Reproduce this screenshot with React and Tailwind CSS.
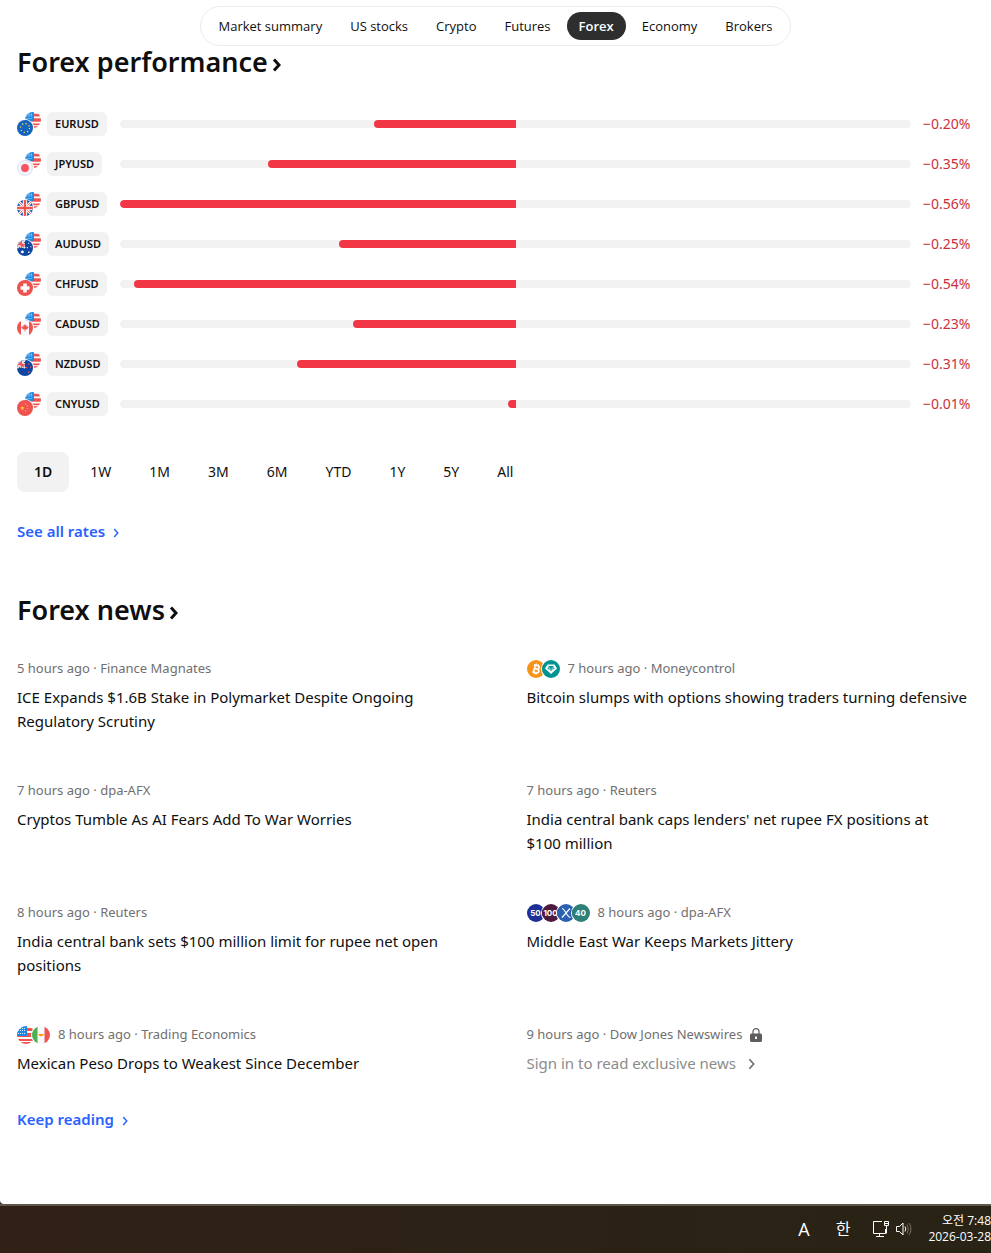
const sections = ["Market summary", "US stocks", "Crypto", "Futures", "Forex", "Economy", "Brokers"];

const rates = [
  { symbol: "EURUSD", flag: "eu", change: -0.2 },
  { symbol: "JPYUSD", flag: "jp", change: -0.35 },
  { symbol: "GBPUSD", flag: "gb", change: -0.56 },
  { symbol: "AUDUSD", flag: "au", change: -0.25 },
  { symbol: "CHFUSD", flag: "ch", change: -0.54 },
  { symbol: "CADUSD", flag: "ca", change: -0.23 },
  { symbol: "NZDUSD", flag: "nz", change: -0.31 },
  { symbol: "CNYUSD", flag: "cn", change: -0.01 },
];

const periods = ["1D", "1W", "1M", "3M", "6M", "YTD", "1Y", "5Y", "All"];

const news = [
  {
    time: "5 hours ago",
    source: "Finance Magnates",
    title: "ICE Expands $1.6B Stake in Polymarket Despite Ongoing Regulatory Scrutiny",
  },
  {
    time: "7 hours ago",
    source: "Moneycontrol",
    title: "Bitcoin slumps with options showing traders turning defensive",
    logos: ["btc", "usdt"],
  },
  { time: "7 hours ago", source: "dpa-AFX", title: "Cryptos Tumble As AI Fears Add To War Worries" },
  {
    time: "7 hours ago",
    source: "Reuters",
    title: "India central bank caps lenders' net rupee FX positions at $100\u00a0million",
  },
  {
    time: "8 hours ago",
    source: "Reuters",
    title: "India central bank sets $100 million limit for rupee net open positions",
  },
  {
    time: "8 hours ago",
    source: "dpa-AFX",
    title: "Middle East War Keeps Markets Jittery",
    logos: ["n50", "n100", "x", "n40"],
  },
  {
    time: "8 hours ago",
    source: "Trading Economics",
    title: "Mexican Peso Drops to Weakest Since December",
    logos: ["us", "mx"],
  },
  { time: "9 hours ago", source: "Dow Jones Newswires", title: "Sign in to read exclusive news", locked: true },
];

const maxChange = Math.max(...rates.map((rate) => Math.abs(rate.change)));

// All artwork is drawn on an 18x18 canvas and cut to a circle
const artwork = {
  us: (
    <>
      <path fill="#fff" d="M0 0h18v18H0z" />
      <path fill="#ef5350" d="M9 2h9v3H9zM9 7h9v4H9zM0 13h18v2H0zM2 16h14v2H2zM0 10h9v1H0z" />
      <path fill="#1e88e5" d="M0 0h10v10H0z" />
      <path
        fill="#d6eafc"
        d="M1 4h1v1H1zM1 7h1v1H1zM3 2h1v1H3zM3 4h1v1H3zM3 7h1v1H3zM5 2h1v1H5zM5 4h1v1H5zM5 7h1v1H5zM7 2h1v1H7zM7 4h1v1H7zM7 7h1v1H7z"
      />
    </>
  ),
  eu: (
    <>
      <path fill="#1565c0" d="M0 0h18v18H0z" />
      <circle cx="9" cy="9" r="5" fill="none" stroke="#ffeb3b" strokeWidth="1.3" strokeDasharray="1.3 2.627" />
    </>
  ),
  jp: (
    <>
      <path fill="#f0f3fa" d="M0 0h18v18H0z" />
      <circle cx="9" cy="9" r="4.4" fill="#f7525f" />
      <circle cx="9" cy="9" r="8.5" fill="none" stroke="#dfe3ee" strokeWidth="1" />
    </>
  ),
  gb: (
    <>
      <path fill="#0d47a1" d="M0 0h18v18H0z" />
      <path stroke="#fff" strokeWidth="3" d="M0 0l18 18M18 0L0 18" />
      <path stroke="#ef5350" strokeWidth="1" d="M0 0l18 18M18 0L0 18" />
      <path stroke="#fff" strokeWidth="5" d="M9 0v18M0 9h18" />
      <path stroke="#ef5350" strokeWidth="2.6" d="M9 0v18M0 9h18" />
    </>
  ),
  au: (
    <>
      <path fill="#0d47a1" d="M0 0h18v18H0z" />
      <path stroke="#e8eaf6" strokeWidth="2.4" d="M0 0l9 9M9 0L0 9" />
      <path stroke="#fff" strokeWidth="3" d="M5 0v9M0 5h9" />
      <path stroke="#ef5350" strokeWidth="1.6" d="M5 0v9M0 5h9M1 1l7 7" />
      <path
        fill="#fff"
        d="M6 11.2l.6 1.2 1.4-.2-.8 1.1.8 1.2-1.4-.2-.6 1.3-.6-1.3-1.4.2.8-1.2-.8-1.1 1.4.2zM12.5 3h1.2v1.2h-1.2zM11 8h1.2v1.2H11zM15 7h1.2v1.2H15zM12.5 13h1.6v1.6h-1.6z"
      />
    </>
  ),
  nz: (
    <>
      <path fill="#0d47a1" d="M0 0h18v18H0z" />
      <path stroke="#e8eaf6" strokeWidth="2.4" d="M0 0l9 9M9 0L0 9" />
      <path stroke="#fff" strokeWidth="3" d="M5 0v9M0 5h9" />
      <path stroke="#ef5350" strokeWidth="1.6" d="M5 0v9M0 5h9M1 1l7 7" />
      <path fill="#f7525f" d="M12.4 4h1.4v1.4h-1.4zM10 8h1.4v1.4H10zM14.6 7.4H16v1.4h-1.4zM12.4 13h1.6v1.6h-1.6z" />
    </>
  ),
  ch: (
    <>
      <path fill="#ef5350" d="M0 0h18v18H0z" />
      <path fill="#fff" d="M7 4h4v3h3v4h-3v3H7v-3H4V7h3z" />
    </>
  ),
  ca: (
    <>
      <path fill="#f8f9fd" d="M0 0h18v18H0z" />
      <path fill="#ef5350" d="M0 0h4.5v18H0zM13.5 0H18v18h-4.5z" />
      <path
        fill="#ef5350"
        d="M9 4.5l1 1.7 1-.4-.2 2.2 1.5-1 .7 1.5-2 2.2H9.4V13h-.8v-2.3H7L5 8.5 5.7 7l1.5 1L7 5.8l1 .4z"
      />
    </>
  ),
  cn: (
    <>
      <path fill="#ef5350" d="M0 0h18v18H0z" />
      <path
        fill="#ffca28"
        d="M6 6.5l.7 1.7 1.8.1-1.4 1.2.5 1.8-1.6-1-1.6 1 .5-1.8-1.4-1.2 1.8-.1zM9 4h1.2v1.2H9zM11 6h1.2v1.2H11zM11 9h1.2v1.2H11zM9 11.5h1.2v1.2H9z"
      />
    </>
  ),
  mx: (
    <>
      <path fill="#f8f9fd" d="M0 0h18v18H0z" />
      <path fill="#4caf50" d="M0 0h5.5v18H0z" />
      <path fill="#ef5350" d="M12.5 0H18v18h-5.5z" />
      <path fill="#ff9800" d="M6 8h6l-1 1.5-2 1-2-1z" />
    </>
  ),
  btc: (
    <>
      <path fill="#f7931a" d="M0 0h18v18H0z" />
      <g transform="rotate(14 9 9)" fill="none" stroke="#fff" strokeWidth="1.7">
        <path d="M6 5.4h4a1.7 1.7 0 0 1 0 3.5H7.4M7.4 8.9h3a1.8 1.8 0 0 1 0 3.7H6M7.4 5.4v7" />
        <path strokeWidth="1.2" d="M8.2 3.6v2M10.1 3.6v2M8.2 12.4v2M10.1 12.4v2" />
      </g>
    </>
  ),
  usdt: (
    <>
      <path fill="#009393" d="M0 0h18v18H0z" />
      <path fill="#fff" d="M5.5 4.5h7L15 8.5l-6 5.5-6-5.5z" />
      <path
        fill="none"
        stroke="#009393"
        strokeWidth="1"
        d="M6.5 6.4h5M9 6.4V11M5.7 8.3c0 1 6.6 1 6.6 0s-6.6-1-6.6 0z"
      />
    </>
  ),
  x: (
    <>
      <path fill="#2962b0" d="M0 0h18v18H0z" />
      <path fill="none" stroke="#fff" strokeWidth="1.2" d="M5 4.5c3 0 5 9 8.5 9M13 4.5l-8 9" />
    </>
  ),
};

const indexLogos = {
  n50: { label: "50", className: "bg-[#1e2f97]" },
  n100: { label: "100", className: "bg-[#4e1a3d]" },
  n40: { label: "40", className: "bg-[#2d8077]" },
};

const Round = ({ name, className }) => (
  <svg viewBox="0 0 18 18" className={`rounded-full ${className}`} aria-hidden="true">
    {artwork[name]}
  </svg>
);

const Logo = ({ name }) => {
  const index = indexLogos[name];

  if (index) {
    return (
      <span
        className={`flex size-[18px] items-center justify-center overflow-hidden rounded-full font-['Inter',sans-serif] text-[8px] font-bold text-white ${index.className}`}
      >
        {index.label}
      </span>
    );
  }
  return <Round name={name} className="size-[18px]" />;
};

const Chevron = ({ className, strokeWidth }) => (
  <svg
    viewBox="0 0 8 14"
    className={className}
    fill="none"
    stroke="currentColor"
    strokeWidth={strokeWidth}
    aria-hidden="true"
  >
    <path d="M1.5 1.5L6.5 7l-5 5.5" />
  </svg>
);

const SectionTitle = ({ children }) => (
  <h2 className="text-[27px] leading-8 font-semibold">
    <a href="#" className="inline-flex items-center gap-1">
      {children}
      <Chevron className="mt-1.5 h-[14px] w-[9px]" strokeWidth="3" />
    </a>
  </h2>
);

const MoreLink = ({ children }) => (
  <a href="#" className="inline-flex items-center gap-2 leading-6 font-semibold text-[#2962ff]">
    {children}
    <Chevron className="mt-1 h-[10px] w-[6px]" strokeWidth="2" />
  </a>
);

const RateRow = ({ rate }) => {
  const width = (Math.abs(rate.change) / maxChange) * 50;

  return (
    <li className="grid grid-cols-[91px_1fr_51px] items-center gap-3">
      <a href="#" className="flex items-center gap-1.5">
        <span className="relative size-6 shrink-0">
          <Round name="us" className="absolute top-0 right-0 size-4" />
          <Round name={rate.flag} className="absolute bottom-0 left-0 size-4 ring-1 ring-white" />
        </span>
        <span className="rounded-md bg-[#f2f2f2] px-2 text-[11px] leading-6 font-semibold">{rate.symbol}</span>
      </a>
      <div className="flex h-2 overflow-hidden rounded-full bg-[#f2f2f2]">
        <div className="ml-auto rounded-l-full bg-[#f23645]" style={{ width: `${width}%` }} />
        <div className="w-1/2" />
      </div>
      <span className="text-sm leading-6 whitespace-nowrap text-[#cc2f3c]">
        −{Math.abs(rate.change).toFixed(2)}%
      </span>
    </li>
  );
};

const NewsItem = ({ item }) => (
  <article>
    <div className="flex h-[18px] items-center text-[13px] text-[#707070]">
      {item.logos && (
        <span className="mr-2 flex">
          {item.logos.map((logo, idx) => (
            <span key={logo} className={`rounded-full ring-1 ring-white ${idx > 0 ? "-ml-[3px]" : ""}`}>
              <Logo name={logo} />
            </span>
          ))}
        </span>
      )}
      <span>
        {item.time} · {item.source}
      </span>
      {item.locked && (
        <svg viewBox="0 0 12 14" className="ml-2 h-[14px] w-3" aria-hidden="true">
          <path fill="none" stroke="#5d5d5d" strokeWidth="1.2" d="M3 6V3.6a3 3 0 0 1 6 0V6" />
          <path
            fill="#5d5d5d"
            fillRule="evenodd"
            d="M1.5 5.5h9A1.5 1.5 0 0 1 12 7v5.5a1.5 1.5 0 0 1-1.5 1.5h-9A1.5 1.5 0 0 1 0 12.5V7a1.5 1.5 0 0 1 1.5-1.5zM5 8.5V11h2V8.5z"
          />
        </svg>
      )}
    </div>
    <h3 className="mt-[7px] leading-6">
      {item.locked ? (
        <a href="#" className="inline-flex items-center gap-3 text-[#8c8c8c]">
          {item.title}
          <Chevron className="mt-0.5 h-[12px] w-[7px] text-[#707070]" strokeWidth="2" />
        </a>
      ) : (
        <a href="#">{item.title}</a>
      )}
    </h3>
  </article>
);

const Taskbar = () => (
  <footer className="flex h-[49px] items-center justify-end overflow-hidden border-t-2 border-[#5f564c] bg-linear-to-r from-[#302016] to-[#282315] pb-0.5 font-['Open_Sans','Noto_Sans_CJK_KR',sans-serif] text-white">
    <span className="text-lg">A</span>
    <span className="ml-[26px] text-base">한</span>
    <svg viewBox="0 0 17 18" className="ml-[22px] h-[18px] w-[17px]" fill="none" stroke="currentColor" aria-hidden="true">
      <path d="M10 1.5H1.5v12h12V9M7.5 13.5v3M4 16.5h8M12.5 1.5h4v4h-4zM12.5 3.5h4M14.5 5.5v8" />
    </svg>
    <svg viewBox="0 0 17 16" className="ml-1.5 h-4 w-[17px]" fill="none" stroke="currentColor" aria-hidden="true">
      <path d="M1.5 5.5h3L8 2v12l-3.5-3.5h-3zM10 5.5q1.6 2.5 0 5" />
      <path stroke="#77705f" d="M12 3.5q3 4.5 0 9M14 2q4 6 0 12" />
    </svg>
    <div className="ml-4 text-right text-xs leading-4 whitespace-nowrap">
      <p>오전 7:48</p>
      <p>2026-03-28</p>
    </div>
  </footer>
);

export default function App() {
  return (
    <div className="bg-[#302016] font-['Noto_Sans',sans-serif] text-[15px] text-[#0f0f0f]">
      <div className="rounded-bl-sm bg-white pt-1.5 pb-[72px]">
        <nav className="mx-auto flex w-fit gap-1 rounded-full border border-[#ebebeb] bg-white p-[5px] font-['Open_Sans',sans-serif]">
          {sections.map((section) => (
            <button
              key={section}
              type="button"
              className={`rounded-full px-3 text-[13px] leading-7 whitespace-nowrap ${
                section === "Forex" ? "bg-[#2e2e2e] font-semibold text-white" : ""
              }`}
            >
              {section}
            </button>
          ))}
        </nav>

        <main className="px-[17px]">
          <SectionTitle>Forex performance</SectionTitle>
          <ul className="mt-[34px] flex flex-col gap-4">
            {rates.map((rate) => (
              <RateRow key={rate.symbol} rate={rate} />
            ))}
          </ul>

          <div className="mt-9 flex gap-1 text-sm">
            {periods.map((period) => (
              <button
                key={period}
                type="button"
                className={`rounded-lg px-[17px] leading-10 ${period === "1D" ? "bg-[#f2f2f2] font-semibold" : ""}`}
              >
                {period}
              </button>
            ))}
          </div>
          <div className="mt-[27px] flex">
            <MoreLink>See all rates</MoreLink>
          </div>

          <div className="mt-[51px]">
            <SectionTitle>Forex news</SectionTitle>
          </div>
          <div className="mt-[34px] grid grid-cols-2 gap-x-[62px] gap-y-[49px]">
            {news.map((item) => (
              <NewsItem key={item.title} item={item} />
            ))}
          </div>
          <div className="mt-8 mb-px flex">
            <MoreLink>Keep reading</MoreLink>
          </div>
        </main>
      </div>
      <Taskbar />
    </div>
  );
}
